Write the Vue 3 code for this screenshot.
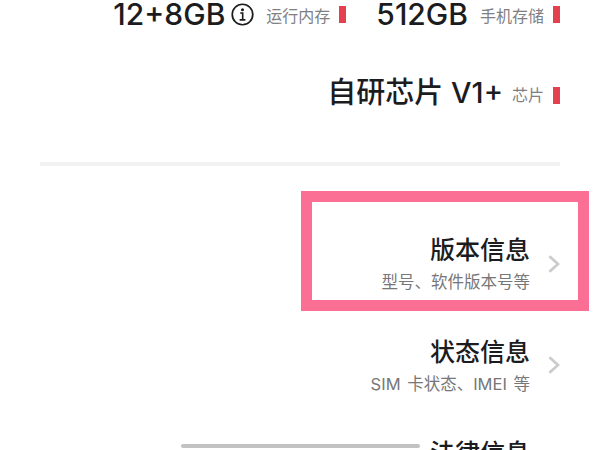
<script setup>
const menu = [
  { title: '版本信息', sub: '型号、软件版本号等' },
  { title: '状态信息', sub: 'SIM 卡状态、IMEI 等' },
  { title: '法律信息', sub: '' }
]
</script>

<template>
  <div class="page">
    <div class="specs">
      <div class="spec-row first">
        <div class="spec">
          <span class="value">12+8GB</span>
          <svg class="info" viewBox="0 0 24 24" width="23" height="23">
            <circle cx="12" cy="12" r="10.7" fill="none" stroke="#1c1c1e" stroke-width="1.8" />
            <circle cx="12" cy="7" r="1.6" fill="#1c1c1e" />
            <path d="M9.6 10.4h2.6v7M9 17.6h6" fill="none" stroke="#1c1c1e" stroke-width="1.7" />
          </svg>
          <span class="label">运行内存</span>
          <i class="mark"></i>
        </div>
        <div class="spec">
          <span class="value">512GB</span>
          <span class="label">手机存储</span>
          <i class="mark"></i>
        </div>
      </div>
      <div class="spec-row second">
        <div class="spec">
          <span class="value">自研芯片 V1+</span>
          <span class="label">芯片</span>
          <i class="mark"></i>
        </div>
      </div>
    </div>
    <div class="divider"></div>
    <div class="menu">
      <div v-for="item in menu" :key="item.title" class="item">
        <div class="texts">
          <div class="title">{{ item.title }}</div>
          <div class="sub">{{ item.sub }}</div>
        </div>
        <svg class="chev" viewBox="0 0 12 18" width="12" height="18">
          <path d="M1.4 1.2L10 9L1.4 16.8" fill="none" stroke="#cbcbcb" stroke-width="2.7" />
        </svg>
      </div>
    </div>
    <div class="frame"></div>
    <div class="home"></div>
  </div>
</template>

<style scoped>
.page {
  position: relative;
  width: 600px;
  height: 450px;
  overflow: hidden;
  background: #fff;
  font-family: Inter, "Noto Sans CJK SC", sans-serif;
  color: #1c1c1e;
}
.specs {
  padding: 0 40px;
}
.spec-row {
  display: flex;
  justify-content: flex-end;
  gap: 30px;
}
.first {
  height: 28px;
}
.second {
  margin-top: 50px;
}
.spec {
  display: flex;
  align-items: center;
}
.first .spec {
  height: 28px;
}
.second .spec {
  height: 30px;
}
.value {
  font-size: 30px;
  font-weight: 500;
  line-height: 28px;
}
.second .value {
  font-size: 29px;
  line-height: 30px;
}
.info {
  margin-left: 6px;
}
.label {
  margin-left: 12px;
  margin-top: 3px;
  font-size: 16px;
  color: #808083;
  line-height: 20px;
}
.second .label {
  margin-left: 9px;
}
.mark {
  display: block;
  width: 7px;
  height: 17px;
  margin-left: 9px;
  background: #e5404f;
}
.second .mark {
  margin-top: 4px;
}
.divider {
  height: 4px;
  margin: 54px 40px 0;
  background: #f2f2f2;
}
.menu {
  margin-top: 68px;
  padding-right: 40px;
  display: flex;
  flex-direction: column;
  gap: 42.5px;
}
.item {
  display: flex;
  justify-content: flex-end;
  align-items: center;
  gap: 18px;
  height: 59px;
}
.texts {
  text-align: right;
}
.title {
  font-size: 25px;
  font-weight: 500;
  line-height: 32px;
}
.sub {
  min-height: 22px;
  margin-top: 5px;
  font-size: 16.5px;
  line-height: 22px;
  word-spacing: 2px;
  color: #77777a;
}
.chev {
  flex: none;
}
.frame {
  position: absolute;
  left: 301px;
  top: 191px;
  width: 288px;
  height: 120px;
  box-sizing: border-box;
  border: 11px solid #fb6f95;
}
.home {
  position: absolute;
  left: 181px;
  top: 444px;
  width: 239px;
  height: 4px;
  border-radius: 2px;
  background: #c2c2c2;
}
</style>
